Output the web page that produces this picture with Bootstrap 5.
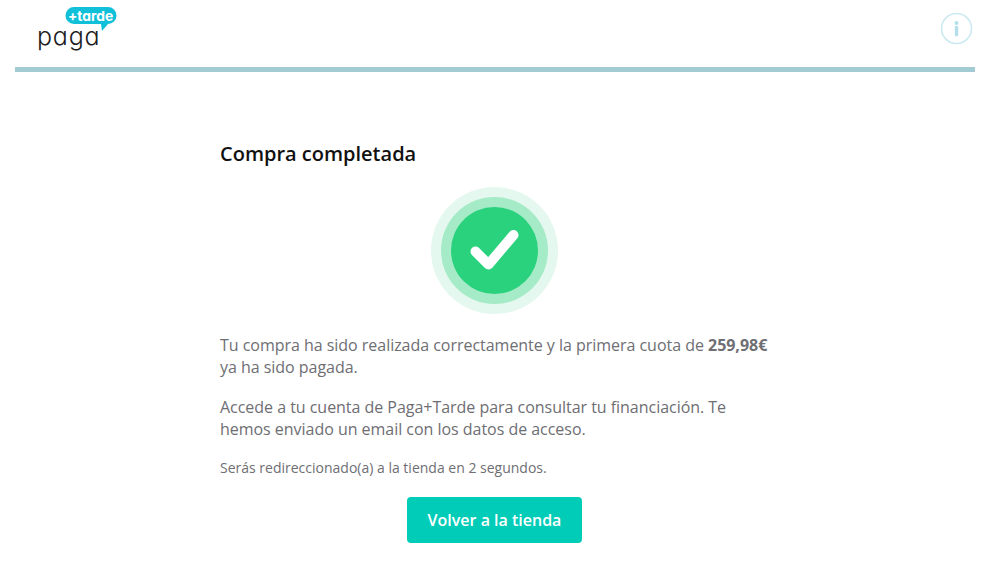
<!DOCTYPE html>
<html lang="es">
<head>
    <meta charset="UTF-8">
    <meta name="viewport" content="width=device-width, initial-scale=1">
    <title>Compra completada</title>
    <link href="https://cdn.jsdelivr.net/npm/bootstrap@5.3.0/dist/css/bootstrap.min.css" rel="stylesheet">
    <style>
        body {
            font-family: "Open Sans", "Liberation Sans", sans-serif;
            color: #6e6e73;
            background: #fff;
            width: 989px;
            height: 564px;
            overflow: hidden;
        }

        .top-bar {
            height: 72px;
            margin: 0 14px 0 15px;
            padding: 6px 0 0 23px;
            border-bottom: 5px solid #a3cbd3;
        }

        .logo-box {
            width: 82px;
            height: 48px;
        }

        .logo-paga {
            font-family: "Inter", sans-serif;
            font-feature-settings: "cv11";
            font-size: 25px;
            font-weight: 300;
            letter-spacing: 0.8px;
            fill: #1c1c22;
        }

        .logo-tarde {
            font-family: "Inter", sans-serif;
            font-feature-settings: "cv11";
            font-size: 13.8px;
            font-weight: 700;
            fill: #fff;
        }

        .info-icon {
            margin: 5.5px 2.5px 0 0;
        }

        .content-box {
            width: 549px;
            margin: 0 auto;
            padding-top: 69px;
        }

        .page-title {
            font-size: 20px;
            font-weight: 600;
            line-height: 26px;
            color: #111;
            margin-bottom: 19.5px;
        }

        .check-wrap {
            margin-bottom: 19.5px;
        }

        .msg-text {
            font-size: 16px;
            line-height: 22px;
            letter-spacing: -0.03px;
            margin-bottom: 18px;
        }

        .msg-text strong {
            font-weight: 700;
        }

        .note-text {
            font-size: 14px;
            line-height: 20px;
            margin-bottom: 19px;
        }

        .btn-shop {
            width: 175px;
            height: 46px;
            padding: 0;
            font-size: 16px;
            font-weight: 600;
            line-height: 46px;
            color: #fff;
            background: #00ccb7;
            border: 0;
            border-radius: 4px;
        }
    </style>
</head>
<body>

<div class="top-bar d-flex justify-content-between align-items-start">
    <svg class="logo-box" viewBox="0 0 82 48" aria-label="Paga+Tarde">
        <text class="logo-paga" x="-1" y="39">paga</text>
        <path d="M36 1 H70 a8.5 8.5 0 0 1 8.5 8.5 a8.5 8.5 0 0 1 -8.5 8.5 L64 25 L63 18 H36 a8.5 8.5 0 0 1 0 -17 Z" fill="#10c0d8"/>
        <text class="logo-tarde" x="30" y="15">+tarde</text>
    </svg>
    <svg class="info-icon" width="33" height="33" viewBox="0 0 33 33" aria-label="info">
        <circle cx="16.5" cy="16.5" r="15" fill="none" stroke="#cbe9f0" stroke-width="1.5"/>
        <circle cx="16.5" cy="11" r="2" fill="#b4dfe9"/>
        <rect x="14.8" y="13.8" width="3.4" height="10.6" rx="1.7" fill="#b4dfe9"/>
    </svg>
</div>

<div class="content-box">
    <h1 class="page-title">Compra completada</h1>
    <div class="check-wrap d-flex justify-content-center">
        <svg width="128" height="128" viewBox="0 0 128 128">
            <circle cx="63.5" cy="63.5" r="63.5" fill="#e4f8ef"/>
            <circle cx="63.5" cy="63.5" r="53.5" fill="#a5ebc7"/>
            <circle cx="63.5" cy="63.5" r="43.5" fill="#2bd27d"/>
            <path d="M44.5 64.5 L57.5 77.5 L82.5 48" fill="none" stroke="#fff" stroke-width="10" stroke-linecap="round" stroke-linejoin="round"/>
        </svg>
    </div>
    <p class="msg-text">Tu compra ha sido realizada correctamente y la primera cuota de <strong>259,98€</strong> ya ha sido pagada.</p>
    <p class="msg-text">Accede a tu cuenta de Paga+Tarde para consultar tu financiación. Te hemos enviado un email con los datos de acceso.</p>
    <p class="note-text">Serás redireccionado(a) a la tienda en 2 segundos.</p>
    <div class="text-center">
        <button type="button" class="btn btn-shop">Volver a la tienda</button>
    </div>
</div>

<script src="https://cdn.jsdelivr.net/npm/bootstrap@5.3.0/dist/js/bootstrap.bundle.min.js"></script>
</body>
</html>
